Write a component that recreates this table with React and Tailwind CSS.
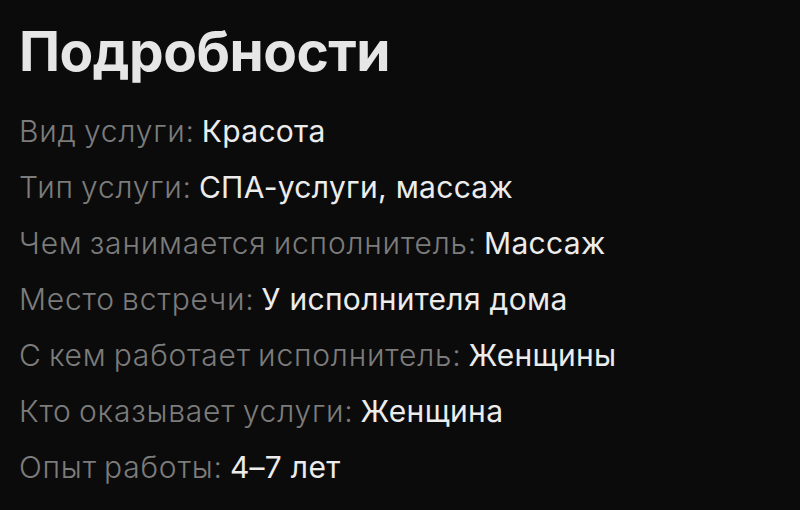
import React from "react";

const rows = [
  ["Вид услуги:", "Красота"],
  ["Тип услуги:", "СПА-услуги, массаж"],
  ["Чем занимается исполнитель:", "Массаж"],
  ["Место встречи:", "У исполнителя дома"],
  ["С кем работает исполнитель:", "Женщины"],
  ["Кто оказывает услуги:", "Женщина"],
  ["Опыт работы:", "4–7 лет"],
];

export default function App() {
  return (
    <div
      className="w-[800px] h-[510px] bg-[#0b0b0b] px-[19px] pt-[18px] overflow-hidden"
      style={{ fontFamily: "Inter, 'Noto Sans', sans-serif" }}
    >
      <h2 className="text-[55px] leading-[66px] font-bold text-[#e6e6e6] tracking-[-0.5px]">
        Подробности
      </h2>
      <div className="mt-[19px] flex flex-col">
        {rows.map(([label, value]) => (
          <div key={label} className="text-[30px] leading-[56px] whitespace-nowrap">
            <span className="text-[#7c7c7c] font-light tracking-[0.8px] [word-spacing:-2px]">
              {label}
            </span>
            <span className="ml-[7px] text-[#ececec] tracking-[0.3px]">{value}</span>
          </div>
        ))}
      </div>
    </div>
  );
}
